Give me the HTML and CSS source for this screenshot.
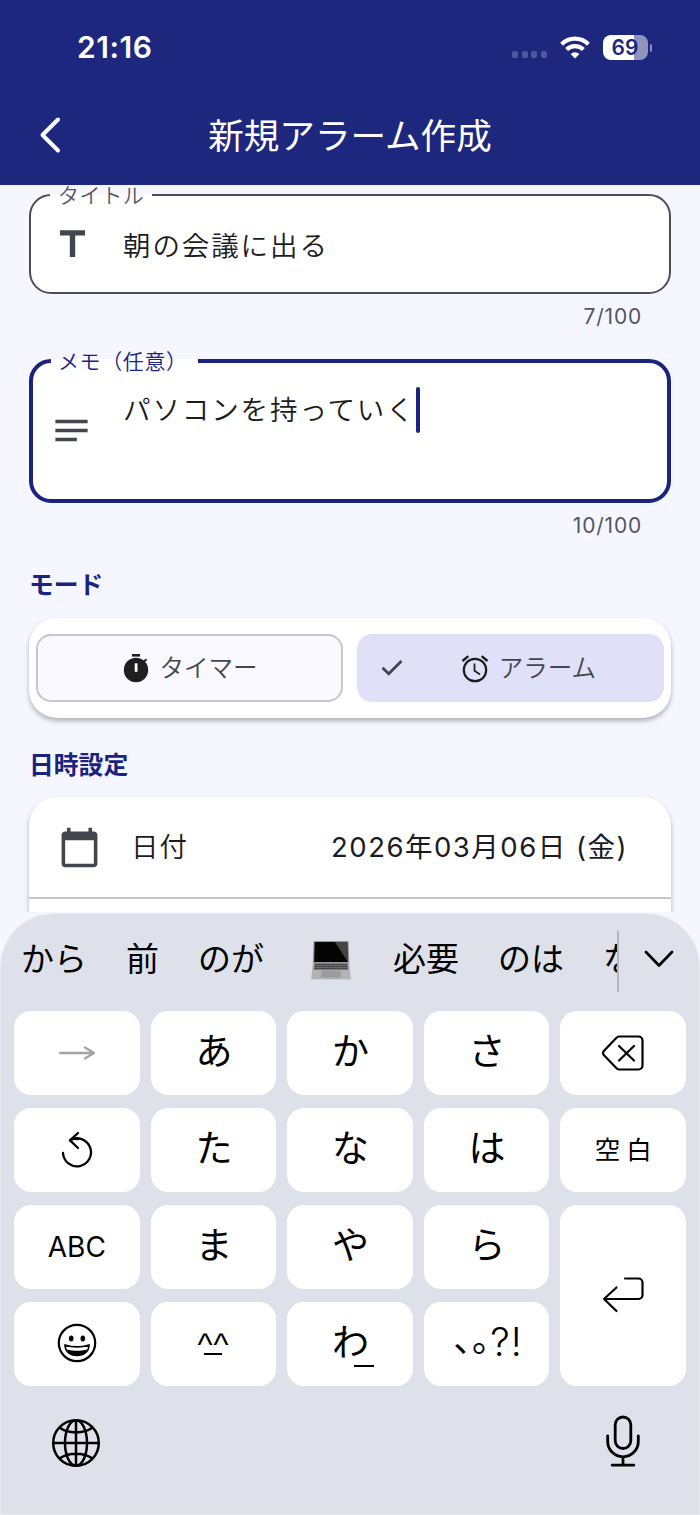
FILE: index.html
```html
<!DOCTYPE html>
<html lang="ja">
<head>
    <meta charset="UTF-8">
    <meta name="viewport" content="width=device-width, initial-scale=1.0">
    <title>新規アラーム作成</title>
    <link rel="stylesheet" href="styles.css">
</head>
<body>
    <div class="app">
        <header class="header">
            <div class="status-bar">
                <span class="clock">21:16</span>
                <div class="status-icons">
                    <div class="signal"><i></i><i></i><i></i><i></i></div>
                    <svg class="wifi" width="30" height="23" viewBox="0 0 30 23">
                        <g fill="none" stroke="#fff" stroke-width="4.2">
                            <path d="M1.6 8.2a19 19 0 0 1 26.8 0"/>
                            <path d="M6.6 13.6a12 12 0 0 1 16.8 0"/>
                        </g>
                        <path d="M15 22.6l-4.4-4.6a6.4 6.4 0 0 1 8.8 0z" fill="#fff"/>
                    </svg>
                    <div class="battery"><span>69</span></div>
                </div>
            </div>
            <div class="title-bar">
                <svg class="back" width="24" height="40" viewBox="0 0 24 40" fill="none" stroke="#fff" stroke-width="4" stroke-linecap="round" stroke-linejoin="round">
                    <path d="M20 4.5L4.5 20 20 35.5"/>
                </svg>
                <h1>新規アラーム作成</h1>
            </div>
        </header>

        <main class="content">
            <form class="form">
                <fieldset class="field">
                    <legend>タイトル</legend>
                    <svg class="field-icon" viewBox="0 0 24 24"><path d="M5 4v3h5.5v12h3V7H19V4z"/></svg>
                    <span class="value">朝の会議に出る</span>
                </fieldset>
                <div class="counter">7/100</div>

                <fieldset class="field memo">
                    <legend>メモ（任意）</legend>
                    <svg class="field-icon" viewBox="0 0 24 24"><path d="M3 6h18v2H3zM3 11h18v2H3zM3 16h12v2H3z"/></svg>
                    <span class="value">パソコンを持っていく</span><span class="caret"></span>
                </fieldset>
                <div class="counter">10/100</div>

                <h2 class="mode-title">モード</h2>
                <div class="card mode">
                    <div class="chip">
                        <svg width="28" height="30" viewBox="0 0 28 30">
                            <circle cx="14" cy="17" r="12.2" fill="#1f1f1f"/>
                            <path d="M10 1h8v2.6h-8z" fill="#1f1f1f"/>
                            <path d="M22 8.5l2.6-2.2" stroke="#1f1f1f" stroke-width="2"/>
                            <path d="M12.7 10.3h2.8v8.5h-2.8z" fill="#fff"/>
                        </svg>
                        <span>タイマー</span>
                    </div>
                    <div class="chip selected">
                        <svg class="check" width="22" height="18" viewBox="0 0 22 18" fill="none" stroke="#44464f" stroke-width="2.8">
                            <path d="M1.5 8.8l6.2 6L20.5 2"/>
                        </svg>
                        <svg width="28" height="30" viewBox="0 0 28 30" fill="none" stroke="#1b1b1b">
                            <circle cx="14" cy="17" r="11.2" stroke-width="2.2"/>
                            <path d="M13.5 10.5v7.2l5.6 3.8" stroke-width="1.7"/>
                            <path d="M1.5 8l5.8-4.8M26.5 8l-5.8-4.8" stroke-width="2.4"/>
                        </svg>
                        <span>アラーム</span>
                    </div>
                </div>

                <h2 class="date-title">日時設定</h2>
                <div class="card schedule">
                    <div class="row">
                        <svg class="field-icon" viewBox="0 0 24 24"><path d="M20 3h-1V1h-2v2H7V1H5v2H4c-1.1 0-2 .9-2 2v16c0 1.1.9 2 2 2h16c1.1 0 2-.9 2-2V5c0-1.1-.9-2-2-2zm0 18H4V8h16v13z"/></svg>
                        <span class="row-label">日付</span>
                        <span class="row-value">2026年03月06日 (金)</span>
                    </div>
                </div>
            </form>
        </main>

        <section class="keyboard">
            <div class="suggestions">
                <div class="words">
                    <span>から</span>
                    <span>前</span>
                    <span>のが</span>
                    <svg class="laptop" width="40" height="40" viewBox="0 0 40 40">
                        <path d="M2.5 0h35l.8 22H1.7z" fill="#999"/>
                        <path d="M3.7 1h32.6l.6 20H3.1z" fill="#050505"/>
                        <path d="M24 1h12.3l.6 20z" fill="#444"/>
                        <path d="M1.7 22h36.6l1.5 16H.2z" fill="#b3b3b5"/>
                        <path d="M3.5 22.5h33l.7 6H2.8z" fill="#4a4a4c"/>
                        <path d="M3 24.5h34M3 26.5h34" stroke="#999" stroke-width=".6" stroke-dasharray="1.5 .6"/>
                        <path d="M10.5 29.5h19l.5 7H10z" fill="#9c9c9e"/>
                        <path d="M.2 38h39.6v1H.2z" fill="#d0d0d2"/>
                    </svg>
                    <span>必要</span>
                    <span>のは</span>
                    <span>な</span>
                </div>
                <svg class="expand" width="30" height="18" viewBox="0 0 30 18" fill="none" stroke="#000" stroke-width="2.7" stroke-linecap="round" stroke-linejoin="round">
                    <path d="M2 2l13 13.5L28 2"/>
                </svg>
            </div>

            <div class="keys">
                <div class="key">
                    <svg width="36" height="14" viewBox="0 0 36 14" fill="none" stroke="#a3a3a6" stroke-width="2.3" stroke-linecap="round" stroke-linejoin="round">
                        <path d="M1.2 7H34M26 1.5L35 7l-9 5.5"/>
                    </svg>
                </div>
                <div class="key kana">あ</div>
                <div class="key kana">か</div>
                <div class="key kana">さ</div>
                <div class="key">
                    <svg width="42" height="36" viewBox="0 0 42 36" fill="none" stroke="#000" stroke-width="2.2" stroke-linecap="round" stroke-linejoin="round">
                        <path d="M17 1.5h19.5a4 4 0 0 1 4 4v25a4 4 0 0 1-4 4H17a4 4 0 0 1-2.5-1.2L2 20.2a3 3 0 0 1 0-4.4L14.5 2.7A4 4 0 0 1 17 1.5z"/>
                        <path d="M17 11l15 14.5M32 11L17 25.5"/>
                    </svg>
                </div>

                <div class="key">
                    <svg width="32" height="38" viewBox="0 0 32 38" fill="none" stroke="#000" stroke-width="2.3" stroke-linecap="round" stroke-linejoin="round">
                        <path d="M2 22a14 14 0 1 0 7-12.8c2-1 5-1.500 8-1.100"/>
                        <path d="M17 2L9 9.400l8 7.600"/>
                    </svg>
                </div>
                <div class="key kana">た</div>
                <div class="key kana">な</div>
                <div class="key kana">は</div>
                <div class="key space">空白</div>

                <div class="key abc">ABC</div>
                <div class="key kana">ま</div>
                <div class="key kana">や</div>
                <div class="key kana">ら</div>
                <div class="key enter">
                    <svg width="42" height="36" viewBox="0 0 42 36" fill="none" stroke="#000" stroke-width="2.2" stroke-linecap="round" stroke-linejoin="round">
                        <path d="M23 1.5h13.5a4 4 0 0 1 4 4V18a4 4 0 0 1-4 4H2M14.5 10.500L2 22l12.500 12"/>
                    </svg>
                </div>

                <div class="key">
                    <svg class="smile" width="40" height="40" viewBox="0 0 40 40">
                        <circle cx="20" cy="20" r="18.2" fill="none" stroke="#000" stroke-width="2.2"/>
                        <ellipse cx="14.2" cy="15.5" rx="2.3" ry="2.9"/>
                        <ellipse cx="25.8" cy="15.5" rx="2.3" ry="2.9"/>
                        <path d="M8 22c7.5 2.4 16.500 2.400 24 0C32 28.500 27 32.500 20 32.500S8 28.500 8 22z" fill="#fff" stroke="#000" stroke-width="1.6"/>
                        <path d="M10 26.500c6 1.800 14 1.800 20 0-1.500 4-5 6-10 6s-8.500-2-10-6z"/>
                    </svg>
                </div>
                <div class="key face">^^</div>
                <div class="key kana wa">わ</div>
                <div class="key marks"><span class="jp">､｡</span><span>?!</span></div>
            </div>

            <div class="tools">
                <svg width="50" height="50" viewBox="0 0 50 50" fill="none" stroke="#000" stroke-width="2.5">
                    <circle cx="25" cy="25" r="22.8"/>
                    <ellipse cx="25" cy="25" rx="11" ry="22.8"/>
                    <path d="M25 2.2v45.6M2.2 25h45.6M8.500 9.500c8.500 6.500 24.500 6.500 33 0M8.500 40.500c8.500-6.500 24.500-6.500 33 0"/>
                </svg>
                <svg width="36" height="52" viewBox="0 0 36 52" fill="none" stroke="#000" stroke-width="2.8" stroke-linecap="round">
                    <rect x="10.2" y="2" width="15.6" height="31.5" rx="7.8"/>
                    <path d="M2.7 21v5.5a15.3 15.3 0 0 0 30.6 0V21M18 42v8M7.2 50.2h21.6"/>
                </svg>
            </div>
        </section>
    </div>
</body>
</html>
```

FILE: styles.css
```css
* {
    box-sizing: border-box;
}
body {
    margin: 0;
    background-color: #f5f6ff;
    font-family: Inter, "Noto Sans CJK JP", sans-serif;
    color: #1b1b21;
}
svg {
    display: block;
    flex-shrink: 0;
}
.app {
    width: 700px;
    height: 1515px;
    display: flex;
    flex-direction: column;
    overflow: hidden;
}

/* header */
.header {
    height: 185px;
    flex-shrink: 0;
    background-color: #1e277e;
    color: #fff;
}
.status-bar {
    height: 94px;
    padding: 0 48px 0 77px;
    display: flex;
    justify-content: space-between;
    align-items: center;
}
.clock {
    font-size: 30px;
    font-weight: 600;
    letter-spacing: 0.5px;
}
.status-icons {
    display: flex;
    align-items: center;
}
.signal {
    display: flex;
    gap: 3.6px;
    margin: 15px 13px 0 0;
}
.signal i {
    width: 6px;
    height: 6.5px;
    border-radius: 2px;
    background-color: #50579b;
}
.battery {
    position: relative;
    width: 45px;
    height: 25px;
    margin: 0 4px 0 13px;
    padding-right: 1px;
    border-radius: 8px;
    background: linear-gradient(to right, #fff 70%, #8f93be 70%);
    color: #1e277e;
    font-size: 21px;
    font-weight: 600;
    line-height: 25px;
    text-align: center;
}
.battery::after {
    content: "";
    position: absolute;
    right: -4px;
    top: 9px;
    width: 2.5px;
    height: 8px;
    border-radius: 0 3px 3px 0;
    background-color: #8f93be;
}
.title-bar {
    height: 82px;
    display: grid;
    grid-template-columns: 100px 1fr 100px;
    align-items: center;
}
.back {
    margin-left: 38px;
}
h1 {
    margin: 3px 0 0;
    font-size: 35.6px;
    font-weight: 400;
    line-height: 50px;
    text-align: center;
    white-space: nowrap;
}

/* form */
.content {
    height: 727px;
    flex-shrink: 0;
    overflow: hidden;
}
.form {
    margin-top: -3px;
    padding: 0 29px;
}
.field {
    position: relative;
    display: flex;
    height: 112px;
    margin: 0;
    padding: 0 20px;
    border: 2px solid #4b4c55;
    border-radius: 22px;
    background-color: #fff;
    font-weight: 350;
}
legend {
    height: 26px;
    margin-left: -1px;
    padding: 0 8px;
    color: #5a5b64;
    font-size: 21px;
    line-height: 27px;
    letter-spacing: 0.6px;
}
.field-icon {
    width: 43px;
    height: 43px;
    fill: #44464f;
}
.field .field-icon {
    margin-top: 15px;
}
.value {
    margin: 17px 0 0 29px;
    font-size: 27.5px;
    line-height: 42px;
    letter-spacing: 1.9px;
}
.memo {
    height: 155px;
    padding-left: 18px;
    border: 4px solid #1a237e;
}
.memo legend {
    width: 147px;
    margin-left: 0;
    padding-left: 7px;
    color: #1a237e;
}
.memo .field-icon {
    margin: 35px 0 0 -1px;
}
.memo .value {
    margin: 15px 0 0 30px;
}
.caret {
    width: 4px;
    height: 46px;
    margin-top: 13px;
    border-radius: 2px;
    background-color: #1a237e;
}
.counter {
    height: 44px;
    padding-right: 29px;
    color: #55565f;
    font-size: 21px;
    line-height: 45px;
    letter-spacing: 0.8px;
    text-align: right;
}
.field + .counter {
    margin-bottom: 10px;
}
.memo + .counter {
    margin-bottom: 9px;
}
h2 {
    margin: 0;
    color: #1a237e;
    font-size: 24.8px;
    font-weight: 700;
    line-height: 36px;
}
.mode-title {
    margin-top: 20px;
}
.date-title {
    margin-top: 29px;
}
.card {
    border-radius: 28px;
    background-color: #fff;
    box-shadow: 0 3px 5px rgba(0, 0, 0, 0.28);
}
.mode {
    height: 100px;
    margin-top: 15px;
    padding: 16px 7px;
    display: grid;
    grid-template-columns: 1fr 1fr;
    gap: 14px;
}
.chip {
    position: relative;
    display: flex;
    align-items: center;
    justify-content: center;
    gap: 10px;
    border: 2px solid #c6c5d0;
    border-radius: 15px;
    background-color: #faf9ff;
    color: #44464f;
    font-size: 24.5px;
    font-weight: 350;
}
.chip span {
    margin-top: -4px;
}
.chip.selected {
    padding-left: 36px;
    border-color: #e0e0f9;
    background-color: #e0e0f9;
}
.check {
    position: absolute;
    left: 22px;
}
.schedule {
    height: 160px;
    margin-top: 14px;
}
.row {
    height: 102px;
    padding: 0 43px 0 29px;
    display: flex;
    align-items: center;
    border-bottom: 2px solid #c6c5d0;
}
.row-label {
    margin: -4px 0 0 30px;
    font-size: 27.5px;
    font-weight: 350;
    letter-spacing: 1px;
}
.row-value {
    margin: -4px 0 0 auto;
    font-size: 27.5px;
    font-weight: 400;
    letter-spacing: 1.5px;
}

/* keyboard */
.keyboard {
    height: 602px;
    margin-top: 1px;
    flex-shrink: 0;
    border: 1px solid #e8eaf1;
    border-radius: 54px 54px 0 0;
    background-color: #dee1e9;
    color: #000;
}
.suggestions {
    height: 96.5px;
    padding-left: 20px;
    display: flex;
    align-items: center;
}
.words {
    width: 598px;
    height: 61px;
    margin-top: -2px;
    display: flex;
    align-items: center;
    gap: 39px;
    overflow: hidden;
    border-right: 2px solid #b4b6bd;
    font-size: 33px;
    white-space: nowrap;
}
.words span {
    flex-shrink: 0;
    margin-top: -8px;
}
.laptop {
    margin: 0 3px 0 8px;
}
.expand {
    margin: -6px 0 0 25px;
}
.keys {
    padding: 0 13px;
    display: grid;
    grid-template-columns: repeat(5, 1fr);
    grid-auto-rows: 84px;
    gap: 13px 11px;
}
.key {
    position: relative;
    display: flex;
    align-items: center;
    justify-content: center;
    border-radius: 17px;
    background-color: #fff;
}
.kana {
    padding: 0 0 7px 1px;
    font-size: 37px;
}
.space {
    padding: 0 0 5px 6px;
    font-size: 25.5px;
    letter-spacing: 6px;
}
.abc {
    padding-top: 1px;
    font-size: 28px;
}
.enter {
    grid-column: 5;
    grid-row: 3 / span 2;
}
.smile {
    margin-top: -2px;
}
.face {
    padding-top: 2px;
    font-family: "Liberation Sans", sans-serif;
    font-size: 32px;
    letter-spacing: 1px;
}
.face::after,
.wa::after {
    content: "";
    position: absolute;
    background-color: #000;
}
.face::after {
    left: 53px;
    top: 51px;
    width: 18px;
    height: 2.5px;
}
.wa::after {
    left: 67px;
    top: 63px;
    width: 20px;
    height: 2px;
}
.marks {
    padding: 0 0 4px 4px;
    font-size: 39px;
    font-weight: 350;
    letter-spacing: 1px;
}
.jp {
    margin-top: -12px;
    font-size: 36px;
    font-weight: 400;
    letter-spacing: 0;
}
.tools {
    padding: 29px 58px 0 50px;
    display: flex;
    justify-content: space-between;
}
.tools svg:first-child {
    margin-top: 3px;
}
```
